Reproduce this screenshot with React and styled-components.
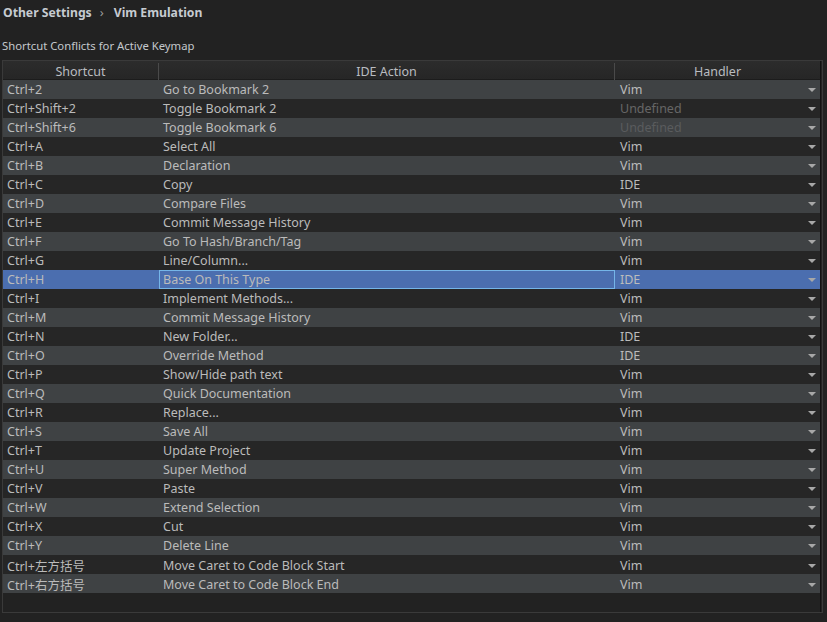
import styled, { createGlobalStyle } from 'styled-components';

const rows = [
  ['Ctrl+2', 'Go to Bookmark 2', 'Vim'],
  ['Ctrl+Shift+2', 'Toggle Bookmark 2', 'Undefined'],
  ['Ctrl+Shift+6', 'Toggle Bookmark 6', 'Undefined'],
  ['Ctrl+A', 'Select All', 'Vim'],
  ['Ctrl+B', 'Declaration', 'Vim'],
  ['Ctrl+C', 'Copy', 'IDE'],
  ['Ctrl+D', 'Compare Files', 'Vim'],
  ['Ctrl+E', 'Commit Message History', 'Vim'],
  ['Ctrl+F', 'Go To Hash/Branch/Tag', 'Vim'],
  ['Ctrl+G', 'Line/Column...', 'Vim'],
  ['Ctrl+H', 'Base On This Type', 'IDE'],
  ['Ctrl+I', 'Implement Methods...', 'Vim'],
  ['Ctrl+M', 'Commit Message History', 'Vim'],
  ['Ctrl+N', 'New Folder...', 'IDE'],
  ['Ctrl+O', 'Override Method', 'IDE'],
  ['Ctrl+P', 'Show/Hide path text', 'Vim'],
  ['Ctrl+Q', 'Quick Documentation', 'Vim'],
  ['Ctrl+R', 'Replace...', 'Vim'],
  ['Ctrl+S', 'Save All', 'Vim'],
  ['Ctrl+T', 'Update Project', 'Vim'],
  ['Ctrl+U', 'Super Method', 'Vim'],
  ['Ctrl+V', 'Paste', 'Vim'],
  ['Ctrl+W', 'Extend Selection', 'Vim'],
  ['Ctrl+X', 'Cut', 'Vim'],
  ['Ctrl+Y', 'Delete Line', 'Vim'],
  ['Ctrl+左方括号', 'Move Caret to Code Block Start', 'Vim'],
  ['Ctrl+右方括号', 'Move Caret to Code Block End', 'Vim'],
];

const SELECTED = 10;

const App = () => (
  <>
    <GlobalStyle />
    <Page>
      <Breadcrumb>
        <span>Other Settings</span>
        <Chevron>›</Chevron>
        <span>Vim Emulation</span>
      </Breadcrumb>
      <Caption>Shortcut Conflicts for Active Keymap</Caption>
      <Table>
        <HeaderRow>
          <HeaderCell>Shortcut</HeaderCell>
          <HeaderCell>IDE Action</HeaderCell>
          <HeaderCell last>Handler</HeaderCell>
        </HeaderRow>
        <Body>
          {rows.map(([key, action, handler], i) => (
            <Row key={key} odd={i % 2 === 0} selected={i === SELECTED}>
              <Cell>{key}</Cell>
              <Cell focused={i === SELECTED}>{action}</Cell>
              <HandlerCell dim={handler === 'Undefined'} odd={i % 2 === 0}>
                <span>{handler}</span>
                <Arrow />
              </HandlerCell>
            </Row>
          ))}
        </Body>
      </Table>
    </Page>
  </>
);

const GlobalStyle = createGlobalStyle`
  html, body {
    margin: 0;
    background: #222222;
  }
  body {
    font-family: "Noto Sans", "Noto Sans CJK SC", sans-serif;
    color: #bbbbbb;
  }
`;

const Page = styled.div`
  width: 827px;
  height: 622px;
  box-sizing: border-box;
  padding: 2px 4px 0 2px;
  background: #222222;
`;

const Breadcrumb = styled.div`
  display: flex;
  align-items: center;
  height: 20px;
  padding-left: 1px;
  font-size: 12.2px;
  font-weight: 700;
  color: #c6cbd1;
`;

const Chevron = styled.span`
  margin: 0 10px 0 8px;
  font-weight: 400;
  color: #9a9a9a;
  font-size: 13px;
`;

const Caption = styled.div`
  margin-top: 14px;
  height: 20px;
  line-height: 20px;
  font-size: 11.3px;
  color: #c4c8cc;
`;

const Table = styled.div`
  margin-top: 4px;
  height: 553px;
  border: 1px solid #3a3a3a;
  box-sizing: border-box;
  display: flex;
  flex-direction: column;
  background: #222222;
  padding-right: 1px;
`;

const cols = '156px 456px 1fr';

const HeaderRow = styled.div`
  display: grid;
  grid-template-columns: ${cols};
  height: 18px;
  background: linear-gradient(#2c2c2c, #262626);
  border-bottom: 1px solid #1c1c1c;
  border-right: 1px solid #111;
`;

const HeaderCell = styled.div`
  display: flex;
  align-items: center;
  justify-content: center;
  font-size: 12.5px;
  color: #b9bcc0;
  border-right: ${(p) => (p.last ? 'none' : '1px solid #4a4a4a')};
  margin: 2px 0;
`;

const Body = styled.div`
  flex: 1;
  border-right: 1px solid #111;
`;

const Row = styled.div`
  display: grid;
  grid-template-columns: ${cols};
  height: 19px;
  font-size: 12.5px;
  color: #bbbbbb;
  background: ${(p) =>
    p.selected ? '#4b6eaf' : p.odd ? '#3f4244' : '#262626'};
`;

const Cell = styled.div`
  display: flex;
  align-items: center;
  box-sizing: border-box;
  white-space: nowrap;
  border: 1px solid ${(p) => (p.focused ? '#75b5e8' : 'transparent')};
  border-left-width: ${(p) => (p.focused ? '1px' : '0')};
  padding-left: ${(p) => (p.focused ? '3px' : '4px')};
`;

const HandlerCell = styled.div`
  display: flex;
  align-items: center;
  justify-content: space-between;
  padding: 0 4px 0 5px;
  color: ${(p) => (p.dim ? (p.odd ? '#5a5c5e' : '#666666') : '#bbbbbb')};
`;

const Arrow = styled.span`
  width: 0;
  height: 0;
  border-left: 4px solid transparent;
  border-right: 4px solid transparent;
  border-top: 4px solid #a8a8a8;
  margin-top: 1px;
`;

export default App;
